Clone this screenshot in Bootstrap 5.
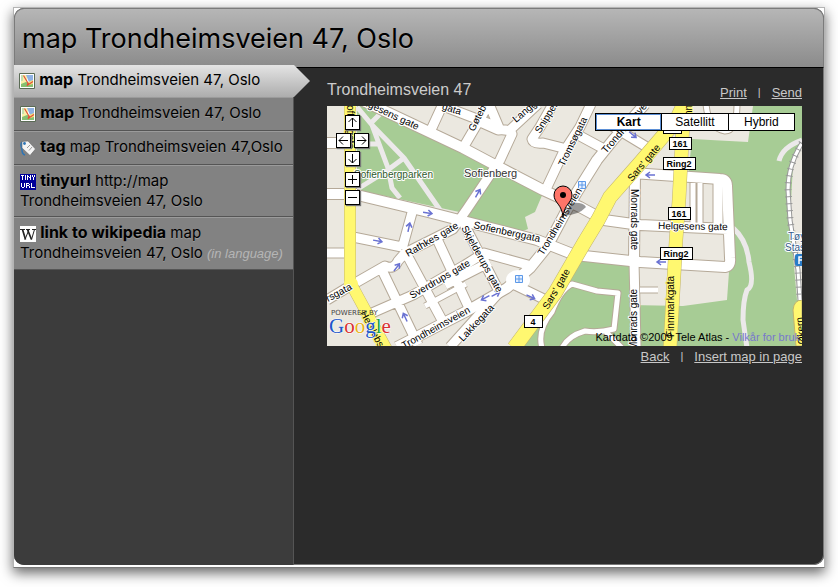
<!DOCTYPE html>
<html lang="en">
<head>
<meta charset="utf-8">
<meta name="viewport" content="width=device-width, initial-scale=1">
<title>map Trondheimsveien 47, Oslo</title>
<link href="https://cdn.jsdelivr.net/npm/bootstrap@5.3.0/dist/css/bootstrap.min.css" rel="stylesheet">
<style>
body { background: #fff; font-family: "Liberation Sans", Arial, sans-serif; padding: 7px 13px 19px; }
.window-frame { min-height: calc(100vh - 26px); background: #fff; border: 1px solid #b4b4b4; border-bottom-color: #777; padding-bottom: 2px; box-shadow: 0 5px 12px rgba(0,0,0,.6); }
.panel { background: #2b2b2b; border-radius: 10px; overflow: hidden; box-shadow: inset 0 0 0 1px #777; }
.title-bar { height: 60px; padding: 2px 7px 0; color: #000; background: linear-gradient(#b6b6b6, #8b8b8b); border: 1px solid #7b7b7b; border-bottom-color: #000; border-radius: 10px 10px 0 0; }
.title-bar h1 { font: 400 27px/36px Inter, sans-serif; text-shadow: 0 1px 0 #bbb; }
.side { width: 280px; background: #3c3c3c; border-right: 1px solid #555; }
.entry { display: block; min-height: 34px; padding: 5px 4px 5px 6px; font: 15px/20px Inter, sans-serif; color: #000; text-decoration: none; background: #828282; border-top: 1px solid #9b9b9b; border-bottom: 1px solid #555; text-shadow: 0 1px 0 #999; }
.entry:hover { color: #000; }
.entry b { font-size: 16px; line-height: 16px; }
.entry svg { width: 16px; height: 16px; vertical-align: -4px; }
.entry.current { position: relative; min-height: 32px; margin-top: -3px; padding: 5px; border: 0; background: linear-gradient(#e4e4e4, #adadad); text-shadow: none; }
.current .tip { position: absolute; left: 100%; top: 0; width: 18px; height: 32px; }
.entry em { font: italic 13px/20px "Liberation Sans", sans-serif; color: #b5b5b5; text-shadow: none; }
.main-area { padding: 10px 22px 10px 33px; color: #ccc; }
.main-area h2 { font-size: 16px; line-height: 24px; color: #ccc; }
.main-area nav { font-size: 13px; line-height: 18px; gap: 11px; padding-top: 2px; }
.main-area nav span { font-size: 11px; line-height: 16px; }
.main-area nav a { color: #c8c8c8; }
.map-box { height: 240px; background: #ebe8e0; }
.map-box > svg { width: 100%; height: 100%; display: block; }
.pan { left: 9px; top: 9px; display: grid; grid-template-columns: 9px 9px 9px 9px; grid-template-rows: 18px 18px 21px 18px 18px; }
.pan button { width: 15px; height: 15px; padding: 0; border: 1px solid #000; background: #fff; box-shadow: 1px 1px 1px #777; display: flex; }
.pan svg { width: 13px; height: 13px; fill: none; stroke: #000; }
.pan .mid { grid-column: 2 / span 2; }
.pan .lft { grid-column: 1 / span 2; grid-row: 2; }
.pan .rgt { grid-column: 3 / span 2; grid-row: 2; }
.kinds { top: 7px; right: 7px; width: 200px; }
.kinds button { flex: 1; height: 18px; padding: 0; border: 1px solid #000; margin-left: -1px; background: #fff; color: #000; font-size: 12px; line-height: 16px; }
.kinds button:first-child { margin-left: 0; font-weight: 700; box-shadow: inset 1px 1px 0 #5b8fd6, inset -1px -1px 0 #5b8fd6; }
.copy { right: 2px; bottom: 2px; font-size: 11px; line-height: 14px; color: #000; white-space: nowrap; }
.copy a { color: #7777cc; text-decoration: none; }
.lbl { font-size: 10px; fill: #000; stroke: #fff; stroke-width: 2px; paint-order: stroke; stroke-linejoin: round; }
.on-yellow { stroke: #fff870; }
.shield rect { fill: #fff; stroke: #000; stroke-width: 1px; }
.shield text { font-size: 9px; font-weight: 700; text-anchor: middle; }
</style>
<script src="https://cdn.jsdelivr.net/npm/bootstrap@5.3.0/dist/js/bootstrap.bundle.min.js"></script>
</head>
<body>
<svg width="0" height="0" class="position-absolute" aria-hidden="true">
  <symbol id="mapicon" viewBox="0 0 16 16">
    <path fill="#fff" stroke="#5a6b55" d="M.5.5h15v15H.5z"/><path fill="#f9f0a8" d="M2 2h6v12H2z"/><path fill="#8fb2e4" d="M7 2h7v6l-4 1z"/><path fill="#86c070" d="M2 11l5-2 7 2v3H2z"/><path fill="#f6de7a" d="M9 9l5-2v4l-4 1z"/><path fill="#c4dfae" d="M2 2h2v6H2z"/><path d="M4.500 2.500l5 8.500M8 12.500L14 8.500M9 10L8 13" fill="none" stroke="#e0503a" stroke-width="1.200"/>
  </symbol>
</svg>
<div class="window-frame d-flex flex-column">
<div class="panel d-flex flex-column flex-grow-1">
  <header class="title-bar d-flex align-items-center"><h1 class="m-0">map Trondheimsveien 47, Oslo</h1></header>
  <div class="d-flex flex-grow-1">
    <nav class="side flex-shrink-0" aria-label="Commands">
      <a href="#" class="entry current"><svg aria-hidden="true"><use href="#mapicon"/></svg> <b>map</b> Trondheimsveien 47, Oslo
        <svg class="tip" viewBox="0 0 18 32" preserveAspectRatio="none" aria-hidden="true"><defs><linearGradient id="tg" x2="0" y2="1"><stop stop-color="#e4e4e4"/><stop offset="1" stop-color="#adadad"/></linearGradient></defs><path d="M0 0h1l16 16L1 32H0z" fill="url(#tg)"/></svg></a>
      <a href="#" class="entry"><svg aria-hidden="true"><use href="#mapicon"/></svg> <b>map</b> Trondheimsveien 47, Oslo</a>
      <a href="#" class="entry"><svg viewBox="0 0 16 16" aria-hidden="true"><path d="M3 2c-4 1-1 6-1 8s0 4 3 5" fill="none" stroke="#2e75b5" stroke-width="1.500"/><path d="M2 1.500l6-.5 7.500 8-5.500 6.500L2 8z" fill="#f4f4f4" stroke="#666" stroke-width=".6"/><circle cx="4.500" cy="3.500" r="1.400" fill="#2e75b5"/><path d="M7 8l3-3M9 10.500l3-3.500" stroke="#999"/></svg> <b>tag</b> map Trondheimsveien 47,Oslo</a>
      <a href="#" class="entry"><svg viewBox="0 0 16 16" aria-hidden="true" shape-rendering="crispEdges"><path fill="#000099" d="M0 0h16v16H0z"/><path fill="none" stroke="#fff" d="M1 1.500h3M2.500 2v4M5.500 1v5M7.500 1v5M10.500 1v5M8 2.500h1M9 3.500h1M12.500 1v2M14.500 1v2M13.500 3v3M1.500 9v4M2 13.500h2M4.500 9v4M6.500 9v5M7 9.500h2M9.500 10v1M7 11.500h2M9.500 12v2M11.500 9v5M12 13.500h3"/></svg> <b>tinyurl</b> http://map Trondheimsveien 47, Oslo</a>
      <a href="#" class="entry"><svg viewBox="0 0 16 16" aria-hidden="true"><path fill="#fff" d="M0 0h16v16H0z"/><path fill="none" stroke="#222" d="M0 3.500h5M6 3.500h4M12 3.500h4M9 3.500l-4 10"/><path d="M2.500 3.500l3 10M7.500 3.500l4 10" stroke="#222" stroke-width="1.700"/><path d="M14.500 3.500l-3 10" stroke="#222"/></svg> <b>link to wikipedia</b> map Trondheimsveien 47, Oslo <em>(in language)</em></a>
    </nav>
    <main class="main-area flex-grow-1">
      <div class="d-flex justify-content-between align-items-start">
        <h2 class="m-0">Trondheimsveien 47</h2>
        <nav class="d-flex mt-1" aria-label="Share"><a href="#">Print</a><span>|</span><a href="#">Send</a></nav>
      </div>
      <div class="map-box position-relative overflow-hidden mt-1">
      <svg viewBox="327 106 475 240" preserveAspectRatio="xMinYMid slice" role="img" aria-label="Street map of Sofienberg, Oslo">
        <defs>
          <g id="wide"><path d="M355 97L463 148L495 165L543 190L580 207L604 220L640 225L728 229M353 194L428 212L475 224L537 240L575 255L640 262L725 267Q731 266 730 258L727 186Q727 179 720 179L632 173M397 347L467 311L507 288L530 268L547 247L564 215L577 192L597 160L613 140L645 104M635 173L634 262M327 143h22M327 194h30"/></g>
          <g id="mid"><path d="M327 253h20M353 237L402 247M402 249L413 209M327 300L350 286L385 266Q394 270 398 261L405 253L453 229L467 209L500 160L512 134Q510 129 498 130L480 122M510 130L538 104M500 130L489 104M547 187L563 153L580 127L591 104M553 104L540 127L532 139Q533 144 543 143L567 149M580 136L604 149M438 104L490 124L498 128M490 102L463 148M442 106L430 132M365 316L413 295L465 265L484 253L528 265M382 270L418 345M407 255L443 322M437 239L470 310M463 222L501 295M450 347L503 288M515 285L550 302M612 126L655 152M718 180V227M634 262L636 346M445 285L490 262"/></g>
          <g id="thin"><path d="M425 306L466 284M693 183V226M700 183V226M542 348Q537 330 552 312Q560 290 572 284L597 291L618 293L614 329Q598 333 585 331Q568 336 562 348M606 332L622 348M640 290H658M706 104Q708 128 725 131Q737 131 737 104"/></g>
          <path id="sars" d="M684 104L676 121L640 163L610 197L598 220L584 243L555 293L514 348"/>
          <path id="finn" d="M684 104L679 200L676 240L670 348"/>
          <path id="toftes" d="M350 104V282L387 350"/>
          <path id="arr" d="M-5 0H3M0-3L4 0L0 3" fill="none" stroke="#6a72d2" stroke-width="1.500"/>
        </defs>
        <path fill="#ebe8e0" d="M327 106h475v240H327z"/>
        <g fill="#a7cc95">
          <path d="M357 100L490 168L464 213L357 190z"/>
          <path d="M493 168L543 193L535 212L525 217L528 229L518 233L466 218z"/>
          <path d="M573 260L630 265L630 346H514z"/>
          <path d="M753 106H802V346H630V305L683 306L727 300L732 230L724 176L688 176L692 139L748 142z"/>
        </g>
        <path fill="#ebe8e0" d="M802 142L793 165L790 220L797 300H802z"/>
        <g fill="none" stroke="#ece9ea" stroke-width="5" stroke-linejoin="round">
          <path d="M357 107L372 125L404 158L440 210M372 125L388 168L392 188L400 198M404 158L385 172L356 190M370 124L382 112M353 144H378"/>
          <path d="M733 228Q747 240 749 262Q755 286 747 290Q743 300 743 320L747 348M802 140Q782 147 779 161"/>
        </g>
        <g fill="none" stroke="#b5a998" stroke-linejoin="round">
          <use href="#wide" stroke-width="12"/><use href="#mid" stroke-width="11"/><use href="#thin" stroke-width="7"/>
        </g>
        <g fill="none" stroke="#fff" stroke-linejoin="round">
          <use href="#wide" stroke-width="10"/><use href="#mid" stroke-width="9"/><use href="#thin" stroke-width="5"/>
        </g>
        <ellipse cx="518" cy="280" rx="12" ry="10" fill="#fff"/>
        <g fill="none" stroke="#c2b46e"><use href="#sars" stroke-width="15"/><use href="#finn" stroke-width="14"/><use href="#toftes" stroke-width="12"/></g>
        <g fill="none" stroke="#fff870"><use href="#sars" stroke-width="14"/><use href="#finn" stroke-width="13"/><use href="#toftes" stroke-width="11"/></g>
        <circle cx="351" cy="284" r="7" fill="#fff870"/>
        <path d="M802 300Q794 300 793 310L796 346H802z" fill="#fff870" stroke="#c2b46e"/>
        <path d="M802 143Q788 165 788 190L790 220L798 270L800 300" fill="none" stroke="#999" stroke-width="5"/>
        <path d="M802 143Q788 165 788 190L790 220L798 270L800 300" fill="none" stroke="#fff" stroke-width="3"/>
        <path d="M802 143Q788 165 788 190L790 220L798 270L800 300" fill="none" stroke="#999" stroke-width="7" stroke-dasharray="1 6"/>
        <g>
          <use href="#arr" transform="translate(428 213) rotate(8)"/><use href="#arr" transform="translate(478 193) rotate(-60)"/><use href="#arr" transform="translate(378 241) rotate(10)"/><use href="#arr" transform="translate(409 227) rotate(-78)"/><use href="#arr" transform="translate(397 267) rotate(-52)"/><use href="#arr" transform="translate(405 317) rotate(-115)"/><use href="#arr" transform="translate(485 298) rotate(152)"/><use href="#arr" transform="translate(496 294) rotate(-28)"/><use href="#arr" transform="translate(531 297) rotate(25)"/><use href="#arr" transform="translate(633 135) rotate(40)"/><use href="#arr" transform="translate(650 175) rotate(180)"/><use href="#arr" transform="translate(661 262) rotate(180)"/>
        </g>
        <g fill="#e5efff" stroke="#5c99e8"><path d="M578.500 181.500h7v7h-7zM579 185h6M582 182v6M515.500 275.500h7v7h-7zM516 279h6M519 276v6"/></g>
        <g class="lbl">
          <text transform="translate(417 130) rotate(25)" text-anchor="end">Helgesens gate</text>
          <text transform="translate(460 115) rotate(18)" text-anchor="end">gata</text>
          <text transform="translate(474 132) rotate(-63)">Gøteborg</text>
          <text transform="translate(516 123) rotate(-40)">Langgata</text>
          <text transform="translate(540 134) rotate(-58)">Snippen</text>
          <text transform="translate(564 167) rotate(-64)">Tromsøgata</text>
          <text transform="translate(606 154) rotate(-49)">Trondheimsveien</text>
          <text transform="translate(543 256) rotate(-59)">Trondheimsveien</text>
          <text transform="translate(631 189) rotate(90)">Monrads gate</text>
          <text transform="translate(637 350) rotate(-90)">Monrads gate</text>
          <text transform="translate(408 257) rotate(-30)">Rathkes gate</text>
          <text transform="translate(412 299) rotate(-30)">Sverdrups gate</text>
          <text transform="translate(461 228) rotate(61)">Skjelderups gate</text>
          <text transform="translate(473 228) rotate(12)">Sofienberggata</text>
          <text transform="translate(404 349) rotate(-29)">Trondheimsveien</text>
          <text transform="translate(463 342) rotate(-47)">Lakkegata</text>
          <text transform="translate(328 302) rotate(-28)">rsgata</text>
          <text transform="translate(658 229) rotate(1)">Helgesens gate</text>
          <g class="on-yellow">
            <text transform="translate(632 182) rotate(-50)">Sars' gate</text>
            <text transform="translate(548 310) rotate(-60)">Sars' gate</text>
            <text transform="translate(674 337) rotate(-90)">Finnmarkgata</text>
            <text transform="translate(692 116) rotate(-90)">nn</text>
            <text transform="translate(347 100) rotate(90)">Toftes gate</text>
            <text transform="translate(360 313) rotate(62)">Herslebs gate</text>
            <text transform="translate(805 344) rotate(-95)">Økern</text>
          </g>
        </g>
        <g class="lbl">
          <text x="354" y="178" style="fill:#2e5a2c">Sofienbergparken</text>
          <text x="464" y="177" style="fill:#333;font-size:11px">Sofienberg</text>
          <text x="788" y="240" style="fill:#345a8a">Tøyen</text><text x="785" y="251" style="fill:#345a8a">Stasjon</text>
        </g>
        <rect x="795" y="254" width="12" height="12" rx="2" fill="#287bc8"/><path d="M799 264v-7h5M799 260h4" fill="none" stroke="#fff" stroke-width="1.500"/>
        <g class="shield">
          <rect x="663.500" y="122.500" width="18" height="11"/>
          <rect x="669.500" y="137.500" width="22" height="12"/><text x="680" y="147">161</text>
          <rect x="663.500" y="157.500" width="32" height="12"/><text x="679" y="167">Ring2</text>
          <rect x="668.500" y="207.500" width="22" height="12"/><text x="679" y="217">161</text>
          <rect x="660.500" y="247.500" width="32" height="12"/><text x="676" y="257">Ring2</text>
          <rect x="524.500" y="315.500" width="18" height="12"/><text x="533" y="325">4</text>
        </g>
        <path d="M563 216L572 203Q583 202 586 207Q579 215 563 216z" fill="#333" opacity=".5"/>
        <path d="M563 217C562 204 554 203 554 195A9 9 0 0 1 572 195C572 203 564 204 563 217z" fill="#fe7569" stroke="#000"/><circle cx="563" cy="195" r="3" fill="#000"/>
        <text x="331" y="315" font-size="7" font-family="DejaVu Sans, sans-serif" fill="#444">POWERED BY</text>
        <text x="329" y="333" font-size="21" font-family="Liberation Serif, serif" stroke="#fff" stroke-width="1" paint-order="stroke" fill="#2156c9">G<tspan fill="#d93232">o</tspan><tspan fill="#e9b31a">o</tspan><tspan fill="#2156c9">g</tspan><tspan fill="#22a33c">l</tspan><tspan fill="#d93232">e</tspan></text>
      </svg>
      <div class="pan position-absolute">
        <button class="mid" aria-label="Pan up"><svg viewBox="0 0 13 13"><path d="M6.500 11V2M2.500 6L6.500 2L10.500 6"/></svg></button>
        <button class="lft" aria-label="Pan left"><svg viewBox="0 0 13 13"><path d="M11 6.500H2M6 2.500L2 6.500L6 10.500"/></svg></button>
        <button class="rgt" aria-label="Pan right"><svg viewBox="0 0 13 13"><path d="M2 6.500H11M7 2.500L11 6.500L7 10.500"/></svg></button>
        <button class="mid" aria-label="Pan down"><svg viewBox="0 0 13 13"><path d="M6.500 2V11M2.500 7L6.500 11L10.500 7"/></svg></button>
        <button class="mid" aria-label="Zoom in"><svg viewBox="0 0 13 13"><path d="M2 6.500H11M6.500 2V11"/></svg></button>
        <button class="mid" aria-label="Zoom out"><svg viewBox="0 0 13 13"><path d="M2 6.500H11"/></svg></button>
      </div>
      <div class="kinds position-absolute d-flex"><button>Kart</button><button>Satellitt</button><button>Hybrid</button></div>
      <div class="copy position-absolute">Kartdata ©2009 Tele Atlas - <a href="#">Vilkår for bruk</a></div>
      </div>
      <nav class="d-flex justify-content-end" aria-label="Map actions"><a href="#">Back</a><span>|</span><a href="#">Insert map in page</a></nav>
    </main>
  </div>
</div>
</div>
</body>
</html>
